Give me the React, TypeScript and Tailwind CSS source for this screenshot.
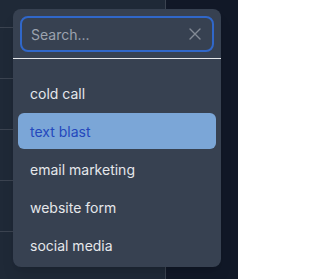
const options = ["cold call", "text blast", "email marketing", "website form", "social media"];

export default function App() {
  const selected = "text blast";

  return (
    <div
      className="relative flex h-[279px] w-[238px] overflow-hidden bg-[#111827]"
      style={{ fontFamily: "Inter, 'Noto Sans', sans-serif" }}
    >
      {/* table behind the popover */}
      <div className="flex h-full w-[166px] flex-col border-r border-[#3b4350] bg-[#1f2937]">
        <div className="h-[28px] shrink-0 border-b border-[#3b4350]" />
        {[0, 1, 2, 3].map((i) => (
          <div key={i} className="h-[51px] shrink-0 border-b border-[#3b4350]" />
        ))}
      </div>

      {/* popover */}
      <div className="absolute left-[13px] top-[9px] flex h-[258px] w-[208px] flex-col rounded-lg bg-[#374151] shadow-lg">
        <div className="px-[7px] pt-[7px]">
          <div className="flex h-[36px] items-center rounded-lg border-2 border-[#3067c9] pl-[9px] pr-[11px]">
            <span className="flex-1 text-[14px] text-[#9ca3af]">Search...</span>
            <svg width="12" height="12" viewBox="0 0 12 12" className="text-[#838a95]">
              <path d="M1 1L11 11M11 1L1 11" stroke="currentColor" strokeWidth="1.4" strokeLinecap="round" />
            </svg>
          </div>
        </div>
        <div className="mt-[6px] h-px bg-[#e5e7eb]" />
        <ul className="flex flex-col gap-[2px] px-[5px] pt-[16px]">
          {options.map((opt) => (
            <li
              key={opt}
              className={
                opt === selected
                  ? "flex h-[36px] items-center rounded-md bg-[#7ba6d7] pl-[12px] text-[14px] text-[#2448bd]"
                  : "flex h-[36px] items-center rounded-md pl-[12px] text-[14px] text-[#e5e7eb]"
              }
            >
              {opt}
            </li>
          ))}
        </ul>
      </div>
    </div>
  );
}
